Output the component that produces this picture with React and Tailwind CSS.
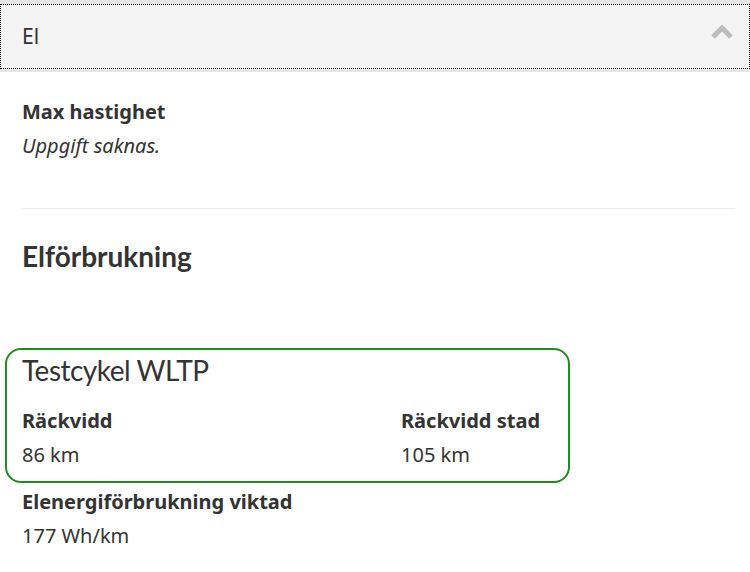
const body = "font-['Noto_Sans','Liberation_Sans',sans-serif]"

function Field({ label, value, italic }) {
  return (
    <div className={body}>
      <div className="text-[20px] font-bold leading-[35px] text-[#333]">{label}</div>
      <div className={`text-[20px] leading-[34px] text-[#333] ${italic ? 'italic' : ''}`}>{value}</div>
    </div>
  )
}

export default function App() {
  return (
    <div className="w-[750px] min-h-[572px] bg-white font-['Lato','Noto_Sans',sans-serif] text-[#333]">
      <div className="bg-[#e6e6e6] pt-[4px] pb-[3px]">
        <button className="flex h-[65px] w-full items-center justify-between bg-[#f4f4f4] px-[22px] outline outline-1 outline-dotted outline-black -outline-offset-1">
          <span className={`${body} text-[21px] text-[#333]`}>El</span>
          <svg width="24" height="16" viewBox="0 0 24 16" className="-mr-[6px] -mt-[9px]">
            <polyline points="3,13 12,4 21,13" fill="none" stroke="#bdbdbd" strokeWidth="5" />
          </svg>
        </button>
      </div>

      <div className="px-[22px] pt-[22px]">
        <Field label="Max hastighet" value="Uppgift saknas." italic />
        <div className="mt-[45px] mr-[-7px] border-t border-[#ececec]" />
        <h2 className="mt-[29px] text-[28px] font-bold leading-[36px] text-[#333]">Elförbrukning</h2>
      </div>

      <div className="mt-[74px] ml-[5px] w-[565px] rounded-[16px] border-2 border-[#228b22] px-[15px] pt-[2px] pb-[9px]">
        <div className="text-[28px] leading-[36px] tracking-[-0.5px] text-[#333]">Testcykel WLTP</div>
        <div className="mt-[15px] grid grid-cols-[379px_1fr]">
          <Field label="Räckvidd" value="86 km" />
          <Field label="Räckvidd stad" value="105 km" />
        </div>
      </div>

      <div className="px-[22px] pt-[1px]">
        <Field label="Elenergiförbrukning viktad" value="177 Wh/km" />
      </div>
    </div>
  )
}
